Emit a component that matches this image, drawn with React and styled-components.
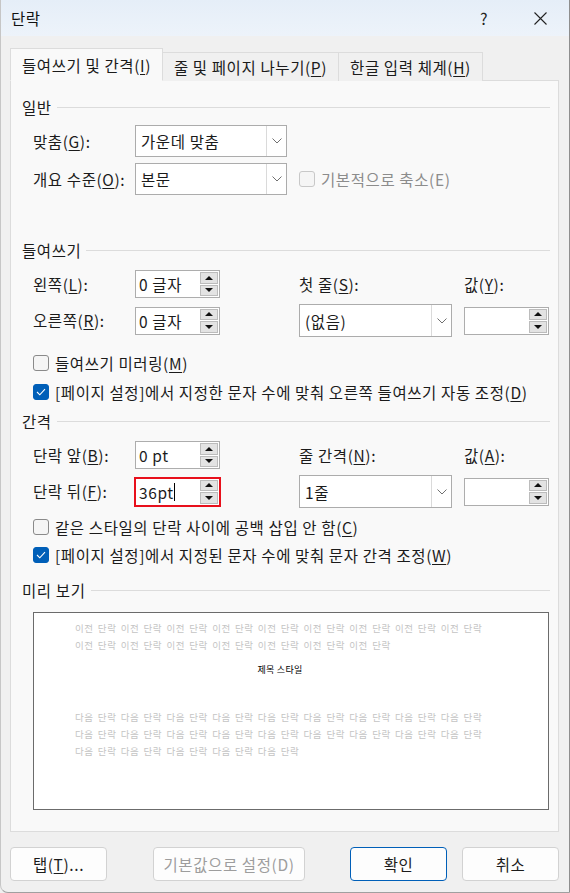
import React from "react";
import styled, { createGlobalStyle } from "styled-components";

const GlobalStyle = createGlobalStyle`
  html, body {
    margin: 0;
    padding: 0;
    background: #f0f0f0;
  }
  body {
    font-family: "Noto Sans CJK KR", "Noto Sans", sans-serif;
    font-size: 15.5px;
    letter-spacing: 0.6px;
    color: #1b1b1b;
  }
  * {
    box-sizing: border-box;
  }
  u {
    text-underline-offset: 2px;
  }
`;

const Window = styled.div`
  width: 570px;
  height: 893px;
  display: flex;
  flex-direction: column;
  background: #f0f0f0;
  border-left: 1px solid #c6c6c6;
  border-right: 1px solid #8e8e8e;
  border-bottom: 1px solid #a0a0a0;
  border-bottom-left-radius: 8px;
  overflow: hidden;
`;

const TitleBar = styled.div`
  height: 36px;
  flex: none;
  display: flex;
  align-items: center;
  padding-left: 10px;
  padding-right: 6px;
  background: linear-gradient(#e5eef8, #edf3fa);
`;

const TitleText = styled.div`
  flex: 1;
  color: #111;
`;

const TitleButton = styled.div`
  width: 46px;
  height: 36px;
  display: flex;
  align-items: center;
  justify-content: center;
  margin-right: ${({ $mr }) => $mr || 0}px;
  font-size: 16px;
  color: #222;
`;

const Body = styled.div`
  flex: 1;
  display: flex;
  flex-direction: column;
  padding: 12px 10px 0 9px;
`;

const Tabs = styled.div`
  display: flex;
  align-items: flex-end;
  height: 33px;
  margin-bottom: -1px;
  position: relative;
  z-index: 1;
`;

const Tab = styled.div`
  width: ${({ $w }) => $w}px;
  height: ${({ $active }) => ($active ? 33 : 29)}px;
  display: flex;
  align-items: center;
  justify-content: center;
  white-space: nowrap;
  background: ${({ $active }) => ($active ? "#f9f9f9" : "#f0f0f0")};
  border: 1px solid #dcdcdc;
  border-bottom: ${({ $active }) => ($active ? "1px solid #f9f9f9" : "none")};
  & + & {
    border-left: none;
  }
`;

const Panel = styled.div`
  height: 752px;
  flex: none;
  background: #f9f9f9;
  border: 1px solid #dcdcdc;
  padding: 16px 8px 0 11px;
  display: flex;
  flex-direction: column;
`;

const Heading = styled.div`
  display: flex;
  align-items: center;
  height: 20px;
  margin-top: ${({ $mt }) => $mt}px;
  color: #1b1b1b;
  &::after {
    content: "";
    flex: 1;
    height: 1px;
    background: #dcdcdc;
    margin-left: 5px;
  }
`;

const Row = styled.div`
  display: grid;
  grid-template-columns: 102px 164px 165px 85px;
  align-items: center;
  height: ${({ $h }) => $h}px;
  margin-top: ${({ $mt }) => $mt}px;
  margin-left: 11px;
`;

const Label = styled.div`
  line-height: 1.2;
  white-space: nowrap;
  color: ${({ $disabled }) => ($disabled ? "#8c8c8c" : "#1b1b1b")};
`;

const ComboBox = styled.div`
  width: ${({ $w }) => $w}px;
  height: ${({ $h }) => $h}px;
  display: flex;
  background: #fff;
  border: 1px solid #acacac;
`;

const ComboValue = styled.div`
  flex: 1;
  display: flex;
  align-items: center;
  padding-left: 5px;
`;

const ComboArrow = styled.div`
  width: 20px;
  display: flex;
  align-items: center;
  justify-content: center;
  border-left: 1px solid #dadada;
`;

const SpinBox = styled.div`
  width: 85px;
  height: 28px;
  display: flex;
  background: #fff;
  border: 1px solid ${({ $hl }) => ($hl ? "#e8101c" : "#adadad")};
  box-shadow: ${({ $hl }) => ($hl ? "0 0 0 1px #e8101c" : "none")};
`;

const SpinValue = styled.div`
  flex: 1;
  display: flex;
  align-items: center;
  padding-left: 3px;
  white-space: nowrap;
`;

const Caret = styled.span`
  display: inline-block;
  width: 1px;
  height: 18px;
  background: #000;
`;

const SpinButtons = styled.div`
  width: 19px;
  display: flex;
  flex-direction: column;
  justify-content: center;
  gap: 1px;
  padding: 1px 1px 1px 0;
`;

const SpinButton = styled.div`
  height: 12px;
  display: flex;
  align-items: center;
  justify-content: center;
  background: #e3e3e3;
  border: 1px solid #bcbcbc;
  &::before {
    content: "";
    border-left: 4px solid transparent;
    border-right: 4px solid transparent;
    ${({ $down }) =>
      $down ? "border-top: 4px solid #111;" : "border-bottom: 4px solid #111;"}
  }
`;

const CheckRow = styled.div`
  display: flex;
  align-items: center;
  gap: 6px;
  height: 26px;
  margin-top: ${({ $mt }) => $mt || 0}px;
  margin-left: ${({ $ml }) => ($ml === undefined ? 11 : $ml)}px;
`;

const Box = styled.div`
  width: 16px;
  height: 16px;
  flex: none;
  border-radius: 3px;
  display: flex;
  align-items: center;
  justify-content: center;
  background: ${({ $checked }) => ($checked ? "#005fb8" : "#f5f5f5")};
  border: 1px solid
    ${({ $checked, $disabled }) =>
      $checked ? "#005fb8" : $disabled ? "#c8c8c8" : "#8a8a8a"};
`;

const Preview = styled.div`
  height: 198px;
  margin-top: 12px;
  margin-left: 11px;
  margin-right: 1px;
  background: #fff;
  border: 1px solid #6b6b6b;
  padding: 7px 0 0 41px;
`;

const PreviewLine = styled.div`
  font-size: 9.5px;
  line-height: 17px;
  height: 17px;
  letter-spacing: 0.55px;
  word-spacing: 1.6px;
  white-space: nowrap;
  color: #c4c4c4;
`;

const PreviewTitle = styled.div`
  width: 410px;
  text-align: center;
  font-size: 9px;
  letter-spacing: 0.3px;
  line-height: 17px;
  margin: 7px 0 31px;
  color: #000;
`;

const Footer = styled.div`
  display: flex;
  margin-top: 15px;
`;

const Button = styled.div`
  width: ${({ $w }) => $w}px;
  height: 34px;
  display: flex;
  align-items: center;
  justify-content: center;
  margin-left: ${({ $ml }) => $ml};
  white-space: nowrap;
  background: #fdfdfd;
  border: 1px solid ${({ $primary }) => ($primary ? "#005fb8" : "#d2d2d2")};
  border-radius: 4px;
  color: ${({ $disabled }) => ($disabled ? "#9d9d9d" : "#1b1b1b")};
`;

const Chevron = () => (
  <svg width="10" height="6" viewBox="0 0 10 6">
    <polyline points="0.5,0.5 5,5 9.5,0.5" fill="none" stroke="#707070" strokeWidth="1" />
  </svg>
);

const Combo = ({ value, w = 152, h = 32 }) => (
  <ComboBox $w={w} $h={h}>
    <ComboValue>{value}</ComboValue>
    <ComboArrow>
      <Chevron />
    </ComboArrow>
  </ComboBox>
);

const Spin = ({ value, hl, caret }) => (
  <SpinBox $hl={hl}>
    <SpinValue>
      {value}
      {caret && <Caret />}
    </SpinValue>
    <SpinButtons>
      <SpinButton />
      <SpinButton $down />
    </SpinButtons>
  </SpinBox>
);

const CheckMark = () => (
  <svg width="10" height="8" viewBox="0 0 10 8">
    <polyline points="1,4 3.8,6.8 9,1.2" fill="none" stroke="#fff" strokeWidth="1.1" />
  </svg>
);

const Check = ({ checked, disabled, children, mt, ml }) => (
  <CheckRow $mt={mt} $ml={ml}>
    <Box $checked={checked} $disabled={disabled}>
      {checked && <CheckMark />}
    </Box>
    <Label $disabled={disabled}>{children}</Label>
  </CheckRow>
);

const rep = (word, n) => Array(n).fill(word).join(" ");

export default function App() {
  return (
    <>
      <GlobalStyle />
      <Window>
        <TitleBar>
          <TitleText>단락</TitleText>
          <TitleButton $mr={10}>?</TitleButton>
          <TitleButton>
            <svg width="13" height="13" viewBox="0 0 13 13">
              <path d="M0.5 0.5 L12.5 12.5 M12.5 0.5 L0.5 12.5" stroke="#222" strokeWidth="1.1" />
            </svg>
          </TitleButton>
        </TitleBar>
        <Body>
          <Tabs>
            <Tab $active $w={153}>
              들여쓰기 및 간격(<u>I</u>)
            </Tab>
            <Tab $w={176}>
              줄 및 페이지 나누기(<u>P</u>)
            </Tab>
            <Tab $w={144}>
              한글 입력 체계(<u>H</u>)
            </Tab>
          </Tabs>
          <Panel>
            <Heading $mt={0}>일반</Heading>
            <Row $h={32} $mt={8}>
              <Label>
                맞춤(<u>G</u>):
              </Label>
              <Combo value="가운데 맞춤" />
            </Row>
            <Row $h={32} $mt={6}>
              <Label>
                개요 수준(<u>O</u>):
              </Label>
              <Combo value="본문" />
              <Check disabled ml={0}>
                기본적으로 축소(E)
              </Check>
            </Row>

            <Heading $mt={45}>들여쓰기</Heading>
            <Row $h={30} $mt={9}>
              <Label>
                왼쪽(<u>L</u>):
              </Label>
              <Spin value="0 글자" />
              <Label>
                첫 줄(<u>S</u>):
              </Label>
              <Label>
                값(<u>Y</u>):
              </Label>
            </Row>
            <Row $h={33} $mt={5}>
              <Label>
                오른쪽(<u>R</u>):
              </Label>
              <Spin value="0 글자" />
              <Combo value="(없음)" w={153} h={33} />
              <Spin value="" />
            </Row>
            <Check mt={13}>
              들여쓰기 미러링(<u>M</u>)
            </Check>
            <Check checked mt={3}>
              [페이지 설정]에서 지정한 문자 수에 맞춰 오른쪽 들여쓰기 자동 조정(<u>D</u>)
            </Check>

            <Heading $mt={6}>간격</Heading>
            <Row $h={30} $mt={9}>
              <Label>
                단락 앞(<u>B</u>):
              </Label>
              <Spin value="0 pt" />
              <Label>
                줄 간격(<u>N</u>):
              </Label>
              <Label>
                값(<u>A</u>):
              </Label>
            </Row>
            <Row $h={33} $mt={5}>
              <Label>
                단락 뒤(<u>F</u>):
              </Label>
              <Spin value="36pt" hl caret />
              <Combo value="1줄" w={153} h={33} />
              <Spin value="" />
            </Row>
            <Check mt={6}>
              같은 스타일의 단락 사이에 공백 삽입 안 함(<u>C</u>)
            </Check>
            <Check checked mt={2}>
              [페이지 설정]에서 지정된 문자 수에 맞춰 문자 간격 조정(<u>W</u>)
            </Check>

            <Heading $mt={12}>미리 보기</Heading>
            <Preview>
              <PreviewLine>{rep("이전 단락", 9)}</PreviewLine>
              <PreviewLine>{rep("이전 단락", 7)}</PreviewLine>
              <PreviewTitle>제목 스타일</PreviewTitle>
              <PreviewLine>{rep("다음 단락", 9)}</PreviewLine>
              <PreviewLine>{rep("다음 단락", 9)}</PreviewLine>
              <PreviewLine>{rep("다음 단락", 5)}</PreviewLine>
            </Preview>
          </Panel>
          <Footer>
            <Button $w={97} $ml="0">
              탭(<u>T</u>)...
            </Button>
            <Button $w={152} $ml="46px" $disabled>
              기본값으로 설정(D)
            </Button>
            <Button $w={97} $ml="auto" $primary>
              확인
            </Button>
            <Button $w={97} $ml="15px">
              취소
            </Button>
          </Footer>
        </Body>
      </Window>
    </>
  );
}
